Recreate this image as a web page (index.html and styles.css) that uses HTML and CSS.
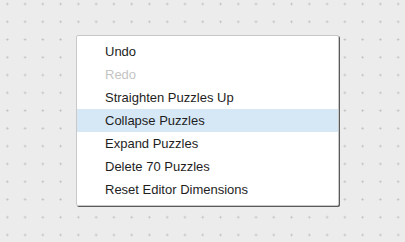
FILE: index.html
```html
<!doctype html>
<html>
  <head>
    <meta charset="UTF-8" />
    <title>Editor Menu</title>
    <link rel="stylesheet" href="styles.css">
  </head>
  <body>
    <div class="canvas">
      <ul class="context-menu">
        <li class="menu-item">Undo</li>
        <li class="menu-item disabled">Redo</li>
        <li class="menu-item">Straighten Puzzles Up</li>
        <li class="menu-item active">Collapse Puzzles</li>
        <li class="menu-item">Expand Puzzles</li>
        <li class="menu-item">Delete 70 Puzzles</li>
        <li class="menu-item">Reset Editor Dimensions</li>
      </ul>
    </div>
  </body>
</html>
```

FILE: styles.css
```css
:root {
  --canvas: #ececec;
  --dot: #bdbdbd;
  --text: #1e1e1e;
  --muted: #c4c4c4;
  --hover: #d6e7f6;
}

* {
  margin: 0;
  padding: 0;
  box-sizing: border-box;
}

body {
  font-family: 'Liberation Sans', Arial, sans-serif;
  background-color: var(--canvas);
  width: 405px;
  height: 242px;
  overflow: hidden;
}

.canvas {
  width: 405px;
  height: 242px;
  padding: 35px 0 0 76px;
  background-color: var(--canvas);
  background-image: radial-gradient(circle at 1.5px 1.5px, var(--dot) 0.7px, transparent 1.4px);
  background-size: 17.77px 17.77px;
  background-position: 5.8px 2.5px;
}

.context-menu {
  list-style: none;
  width: 263px;
  padding: 4px 0;
  background-color: #fff;
  border: 1px solid #c8c8c8;
  border-radius: 2px;
  box-shadow: 1px 1px 0 #5a5a5a;
}

.menu-item {
  height: 23px;
  line-height: 23px;
  padding-left: 28px;
  font-size: 13px;
  color: var(--text);
  cursor: default;
}

.menu-item.disabled {
  color: var(--muted);
}

.menu-item.active {
  background-color: var(--hover);
}
```
